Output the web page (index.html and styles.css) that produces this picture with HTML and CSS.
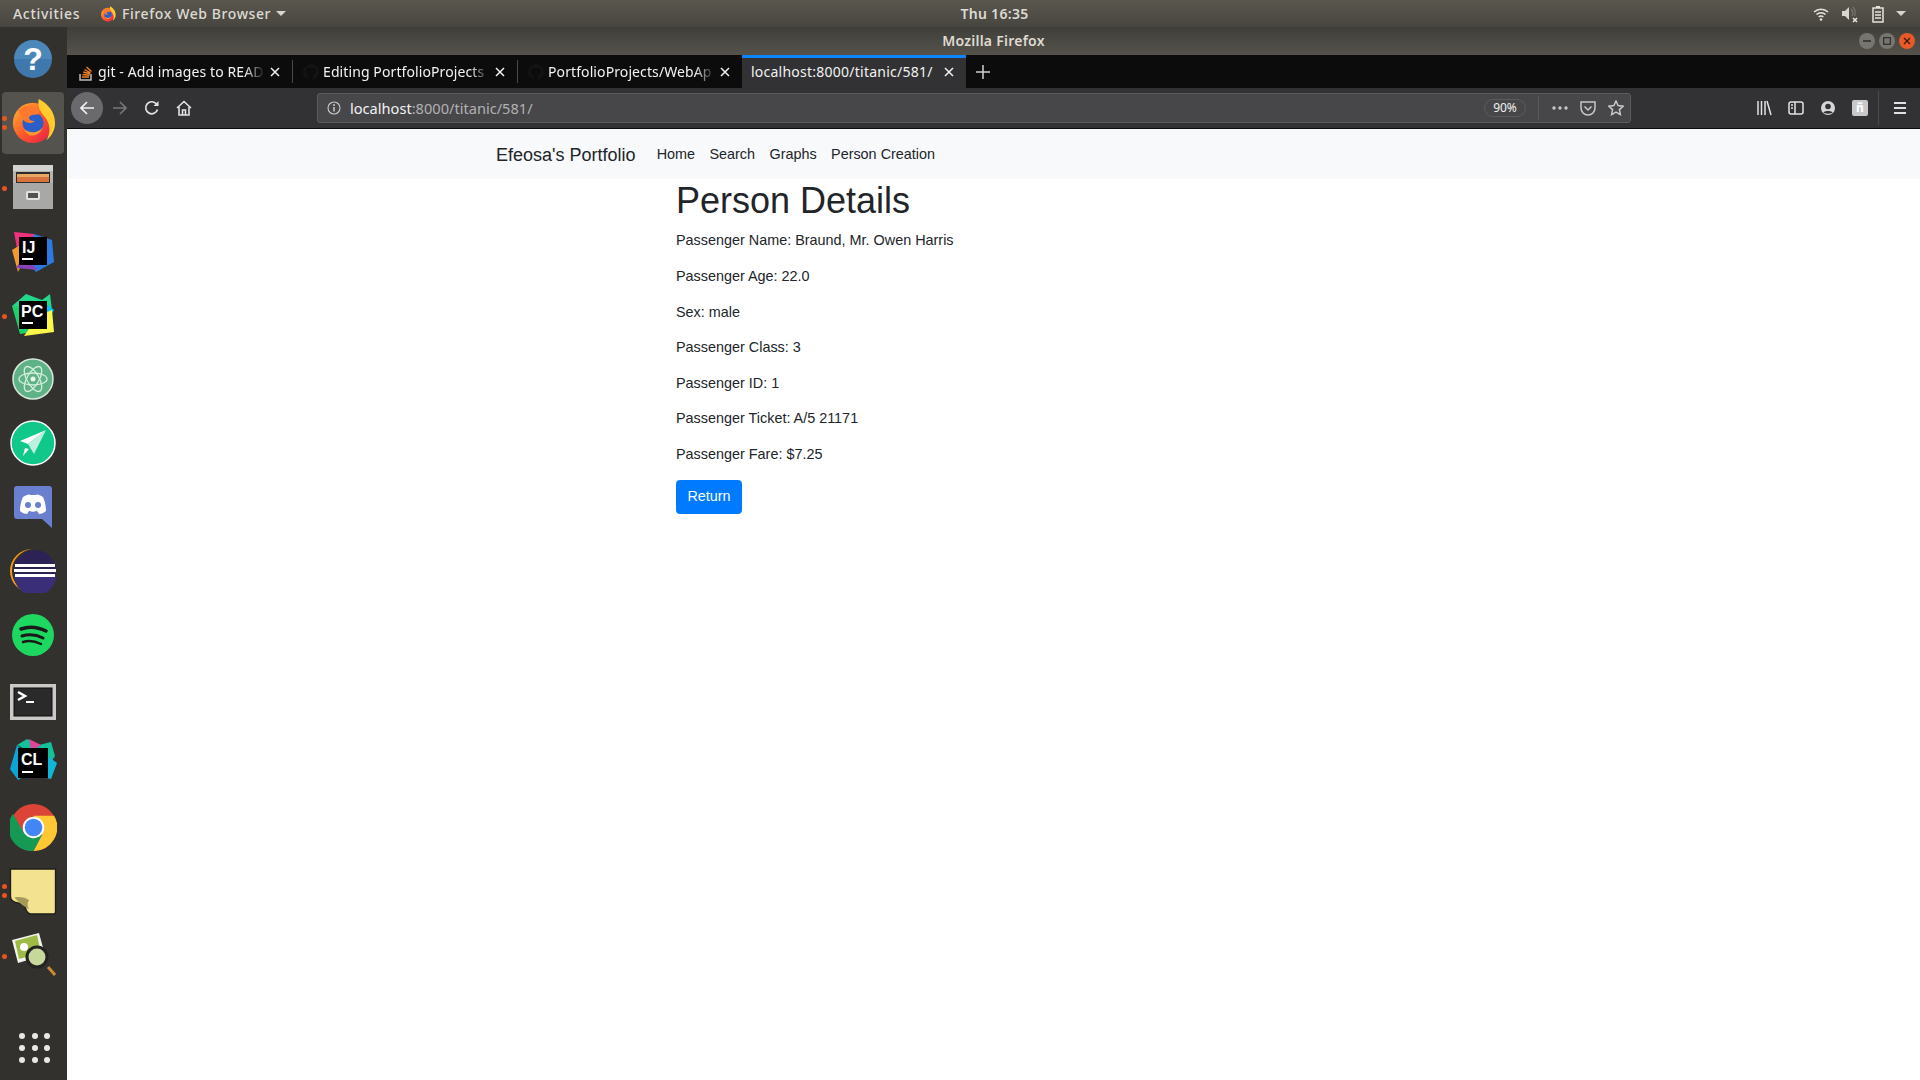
FILE: index.html
```html
<!DOCTYPE html>
<html lang="en">
<head>
    <meta charset="UTF-8">
    <title>Mozilla Firefox</title>
    <link rel="stylesheet" href="styles.css">
</head>
<body>
    <!-- GNOME top bar -->
    <header class="topbar">
        <div class="topbar-left">
            <span class="activities">Activities</span>
            <svg class="app-icon" width="16" height="18" viewBox="0 0 48 48"><use href="#firefox"/></svg>
            <span class="app-name">Firefox Web Browser</span>
            <span class="caret"></span>
        </div>
        <div class="clock">Thu 16:35</div>
        <div class="tray">
            <svg width="16" height="16" viewBox="0 0 16 16" fill="none" stroke="#e6e3dc" stroke-width="1.5"><path d="M1 6a10 10 0 0 1 14 0M3.5 8.5a6.5 6.5 0 0 1 9 0M5.7 11a3.2 3.2 0 0 1 4.6 0"/><circle cx="8" cy="13.5" r="1.3" fill="#e6e3dc" stroke="none"/></svg>
            <svg width="18" height="18" viewBox="0 0 18 18" fill="none"><path d="M1 6h3l4-4v13l-4-4H1z" fill="#d8d5ce"/><path d="M10 4a6 6 0 0 1 1 7M12 2a9 9 0 0 1 1.500 9" stroke="#77756f" stroke-width="1.200"/><path d="M12 13l4 4M16 13l-4 4" stroke="#e6e3dc" stroke-width="1.600"/></svg>
            <svg width="14" height="18" viewBox="0 0 14 18" fill="none"><path d="M5 1h4v2H5z" fill="#e6e3dc"/><rect x="2" y="3" width="10" height="14" stroke="#e6e3dc" stroke-width="1.500"/><path d="M4 7h6M4 10h6M4 13h6" stroke="#e6e3dc" stroke-width="1.500"/></svg>
            <span class="caret tray-caret"></span>
        </div>
    </header>

    <div class="desktop">
        <!-- dock -->
        <nav class="dock">
            <div class="dock-item">
                <svg width="40" height="40" viewBox="0 0 40 40"><circle cx="20" cy="20" r="19" fill="#3f78ad"/><path d="M1 20a19 19 0 0 1 38 0z" fill="#5a96c8" opacity=".5"/><text x="20" y="31" class="icon-q">?</text></svg>
            </div>
            <div class="dock-item is-active">
                <i class="pip pip-1"></i><i class="pip pip-2"></i>
                <svg width="46" height="46" viewBox="0 0 48 48"><use href="#firefox"/></svg>
            </div>
            <div class="dock-item">
                <i class="pip pip-single"></i>
                <svg width="42" height="46" viewBox="0 0 42 46"><rect x="1" y="1" width="40" height="44" rx="2" fill="#b5b5b3"/><rect x="1" y="1" width="40" height="6" fill="#d2d2d0"/><rect x="4" y="8" width="34" height="12" fill="#2e2c2a"/><rect x="5" y="10" width="32" height="3" fill="#e9a765"/><rect x="5" y="13" width="32" height="5" fill="#d9733e"/><rect x="1" y="19" width="40" height="26" fill="#a8a8a6"/><rect x="14" y="27" width="14" height="9" rx="2" fill="#e2e2e0"/><rect x="16" y="29" width="10" height="5" fill="#55534f"/></svg>
            </div>
            <div class="dock-item">
                <svg width="46" height="46" viewBox="0 0 46 46"><path d="M4 4l20 2 6 12-22 8z" fill="#f0327d"/><path d="M24 6l18 6 2 22-18 10-12-14z" fill="#2c7ae0"/><path d="M2 22l10-6 2 16-6 12z" fill="#f09a30"/><path d="M6 40l8-12 14 14z" fill="#8a42b8"/><rect x="9" y="9" width="28" height="28" fill="#000"/><text x="12" y="25" class="icon-jb">IJ</text><rect x="12" y="30" width="11" height="2" fill="#fff"/></svg>
            </div>
            <div class="dock-item">
                <i class="pip pip-single"></i>
                <svg width="46" height="46" viewBox="0 0 46 46"><path d="M2 14L16 2l16 6 8-6 2 16-14 6z" fill="#21d789"/><path d="M2 14l8 28 14-2-6-26z" fill="#1fcf6c"/><path d="M34 10l10 8-6 10z" fill="#07c3f2"/><path d="M14 44l30-4-2-22-14 6z" fill="#fcf84a"/><rect x="9" y="9" width="28" height="28" fill="#000"/><text x="11" y="25" class="icon-jb">PC</text><rect x="12" y="30" width="11" height="2" fill="#fff"/></svg>
            </div>
            <div class="dock-item">
                <svg width="42" height="42" viewBox="0 0 42 42" fill="none"><circle cx="21" cy="21" r="20" fill="#5fb286" stroke="#d8e8dc" stroke-width="1.500"/><g stroke="#d4eedd" stroke-width="1.300"><ellipse cx="21" cy="21" rx="14" ry="6"/><ellipse cx="21" cy="21" rx="14" ry="6" transform="rotate(60 21 21)"/><ellipse cx="21" cy="21" rx="14" ry="6" transform="rotate(120 21 21)"/></g><circle cx="21" cy="21" r="2.500" fill="#e8f6ee"/></svg>
            </div>
            <div class="dock-item">
                <svg width="46" height="46" viewBox="0 0 46 46"><circle cx="23" cy="23" r="22" fill="#0fc88a" stroke="#fff" stroke-width="1.500"/><path d="M36 10L10 21l8 3z" fill="#fff"/><path d="M36 10L18 24l6 10z" fill="#bdf1dd"/><path d="M15 28l4 1-6 7z" fill="#fff"/></svg>
            </div>
            <div class="dock-item">
                <svg width="40" height="42" viewBox="0 0 40 42"><path d="M4 0h32a3 3 0 0 1 3 3v39l-10-9H4a3 3 0 0 1-3-3V3a3 3 0 0 1 3-3z" fill="#6a80ce"/><path d="M7 25c0-8 3-14 3-14 3-2 6-3 7-2h6c1-1 4 0 7 2 0 0 3 6 3 14-2 2-5 3-7 3l-2-3c-4 1-4 1-8 0l-2 3c-2 0-5-1-7-3z" fill="#fff"/><circle cx="15" cy="19" r="3" fill="#6a80ce"/><circle cx="25" cy="19" r="3" fill="#6a80ce"/></svg>
            </div>
            <div class="dock-item">
                <svg width="50" height="44" viewBox="0 0 50 44"><path d="M24 0a22 22 0 0 0 0 44 24 22 0 0 1-20-22A24 22 0 0 1 24 0z" fill="#f09a1a"/><circle cx="27" cy="22" r="21" fill="#2c2255"/><path d="M6 26h42a21 21 0 0 1-42 0z" fill="#3a2e78"/><path d="M7 15h40v3H7zM6 20h42v3H6zM7 25h40v3H7z" fill="#fff"/></svg>
            </div>
            <div class="dock-item">
                <svg width="42" height="42" viewBox="0 0 42 42" fill="none"><circle cx="21" cy="21" r="21" fill="#1ed760"/><g stroke="#1a1a1a" stroke-linecap="round"><path d="M9 15c8-3 17-2 25 2" stroke-width="3.500"/><path d="M10 22c7-2 15-1 21 2" stroke-width="3"/><path d="M11 28c6-2 12-1 18 2" stroke-width="2.500"/></g></svg>
            </div>
            <div class="dock-item dock-terminal">
                <svg width="48" height="38" viewBox="0 0 48 38" fill="none"><rect x="1" y="1" width="46" height="36" fill="#c9c9c7"/><rect x="5" y="5" width="38" height="28" fill="#2a2a2a" stroke="#0c0c0c"/><path d="M9 9l7 4-7 4" stroke="#fff" stroke-width="2.500"/><path d="M17 19h8" stroke="#fff" stroke-width="2"/></svg>
            </div>
            <div class="dock-item">
                <svg width="48" height="48" viewBox="0 0 48 48"><path d="M8 6l10-6 12 6 12-3 4 14-4 6z" fill="#12c09c"/><path d="M20 0l12 6-10 6z" fill="#e0459a"/><path d="M8 6L1 30l8 11 10-6-2-20z" fill="#0ca6d6"/><path d="M24 36l18 4 6-16-8-6z" fill="#10b6d8"/><rect x="9" y="9" width="30" height="30" fill="#000"/><text x="12" y="26" class="icon-jb">CL</text><rect x="13" y="32" width="11" height="2" fill="#fff"/></svg>
            </div>
            <div class="dock-item">
                <svg width="47" height="47" viewBox="0 0 48 48"><circle cx="24" cy="24" r="24" fill="#db4437"/><path d="M24 48a24 24 0 0 0 21-36H24l9 19z" fill="#fcc934"/><path d="M24 48L33 31 24 33 14 29 3 10a24 24 0 0 0 21 38z" fill="#159a55"/><circle cx="24" cy="24" r="11" fill="#fff"/><circle cx="24" cy="24" r="9" fill="#4285f4"/></svg>
            </div>
            <div class="dock-item">
                <i class="pip pip-1"></i><i class="pip pip-2"></i>
                <svg width="50" height="47" viewBox="0 0 48 48"><path d="M1 1h46v44a2 2 0 0 1-2 2H22c-5 0-5-6-7-9-3-3-14-1-14-9z" fill="#f3e28f" stroke="#1e1e1a" stroke-width="1.400"/><path d="M5 30c6-1 11 0 15 3-2 2-2 6 0 9-6-3-11-7-15-12z" fill="#a69a58"/></svg>
            </div>
            <div class="dock-item">
                <i class="pip pip-single"></i>
                <svg width="46" height="48" viewBox="0 0 46 48" fill="none"><path d="M2 9l27-7 6 22-27 8z" fill="#f2f2ee"/><path d="M5 10l22-6 4 18-22 6z" fill="#9dbb45"/><circle cx="14" cy="16" r="4" fill="#fff"/><path d="M38 36l7 8" stroke="#c88a3a" stroke-width="3"/><circle cx="27" cy="26" r="10" fill="#c6d89a" stroke="#232323" stroke-width="3"/></svg>
            </div>
            <div class="dock-apps">
                <i></i><i></i><i></i><i></i><i></i><i></i><i></i><i></i><i></i>
            </div>
        </nav>

        <div class="window">
            <div class="titlebar">
                <span class="title">Mozilla Firefox</span>
                <div class="win-buttons">
                    <span class="win-btn"><svg width="8" height="8" viewBox="0 0 8 8"><path d="M0 4h8" stroke="#2f2e2a" stroke-width="1.500"/></svg></span>
                    <span class="win-btn"><svg width="8" height="8" viewBox="0 0 8 8"><rect x=".7" y=".7" width="6.600" height="6.600" fill="none" stroke="#2f2e2a" stroke-width="1.200"/></svg></span>
                    <span class="win-btn win-close"><svg width="8" height="8" viewBox="0 0 8 8"><path d="M1 1l6 6M7 1L1 7" stroke="#3a1a0c" stroke-width="1.300"/></svg></span>
                </div>
            </div>

            <!-- tabs -->
            <div class="tabbar">
                <div class="tab">
                    <svg class="favicon" width="16" height="18" viewBox="0 0 16 18" fill="none"><path d="M2 11v6h11v-6" stroke="#bcbbbb" stroke-width="1.500"/><path d="M4 14h7M4.500 11.500l7 .7M5.300 9l6.800 1.800M6.500 6.500l6 3.300M8.500 4l5 4.500" stroke="#f48024" stroke-width="1.400"/></svg>
                    <span class="tab-title">git - Add images to READ</span>
                    <svg class="tab-x" width="12" height="12" viewBox="0 0 12 12"><path d="M2 2l8 8M10 2l-8 8" stroke="#f2f2f2" stroke-width="1.500"/></svg>
                </div>
                <div class="tab">
                    <svg class="favicon" width="16" height="16" viewBox="0 0 16 16"><use href="#octocat"/></svg>
                    <span class="tab-title">Editing PortfolioProjects</span>
                    <svg class="tab-x" width="12" height="12" viewBox="0 0 12 12"><path d="M2 2l8 8M10 2l-8 8" stroke="#f2f2f2" stroke-width="1.500"/></svg>
                </div>
                <div class="tab">
                    <svg class="favicon" width="16" height="16" viewBox="0 0 16 16"><use href="#octocat"/></svg>
                    <span class="tab-title">PortfolioProjects/WebAp</span>
                    <svg class="tab-x" width="12" height="12" viewBox="0 0 12 12"><path d="M2 2l8 8M10 2l-8 8" stroke="#f2f2f2" stroke-width="1.500"/></svg>
                </div>
                <div class="tab tab-active">
                    <span class="tab-title">localhost:8000/titanic/581/</span>
                    <svg class="tab-x" width="12" height="12" viewBox="0 0 12 12"><path d="M2 2l8 8M10 2l-8 8" stroke="#f2f2f2" stroke-width="1.500"/></svg>
                </div>
                <svg class="new-tab" width="14" height="14" viewBox="0 0 14 14"><path d="M7 0v14M0 7h14" stroke="#d0d0d0" stroke-width="1.500"/></svg>
            </div>

            <!-- toolbar -->
            <div class="toolbar">
                <span class="tool tool-back"><svg width="16" height="16" viewBox="0 0 16 16" fill="none" stroke="#f2f2f2" stroke-width="1.700"><path d="M15 8H2M8 2L2 8l6 6"/></svg></span>
                <span class="tool"><svg width="16" height="16" viewBox="0 0 16 16" fill="none" stroke="#77777a" stroke-width="1.700"><path d="M1 8h13M8 2l6 6-6 6"/></svg></span>
                <span class="tool"><svg width="16" height="16" viewBox="0 0 16 16" fill="none" stroke="#e2e2e2" stroke-width="1.700"><path d="M13.500 9.500A6 6 0 1 1 12 3.500L14 5.500"/><path d="M14.500 1v5h-5" fill="#e2e2e2" stroke="none"/></svg></span>
                <span class="tool"><svg width="16" height="16" viewBox="0 0 16 16" fill="none" stroke="#e2e2e2" stroke-width="1.600"><path d="M1 8l7-6.500L15 8M3 7v8h10V7M6.500 15v-5h3v5"/></svg></span>
                <div class="urlbar">
                    <svg class="url-info" width="14" height="14" viewBox="0 0 14 14" fill="none"><circle cx="7" cy="7" r="6" stroke="#c8c8c8" stroke-width="1.100"/><path d="M7 6v4.500" stroke="#c8c8c8" stroke-width="1.500"/><circle cx="7" cy="4" r="1" fill="#c8c8c8"/></svg>
                    <span class="url-text">localhost<span class="url-rest">:8000/titanic/581/</span></span>
                    <span class="zoom-pill">90%</span>
                    <span class="url-sep"></span>
                    <span class="url-action"><svg width="16" height="4" viewBox="0 0 16 4" fill="#c8c8c8"><circle cx="2" cy="2" r="1.700"/><circle cx="8" cy="2" r="1.700"/><circle cx="14" cy="2" r="1.700"/></svg></span>
                    <span class="url-action"><svg width="16" height="16" viewBox="0 0 16 16" fill="none" stroke="#c8c8c8" stroke-width="1.500"><path d="M1 2h14v6a7 7 0 0 1-14 0z"/><path d="M4.500 6.500L8 10l3.500-3.500"/></svg></span>
                    <span class="url-action"><svg width="16" height="16" viewBox="0 0 16 16" fill="none" stroke="#c8c8c8" stroke-width="1.500"><path d="M8 1l2.100 4.600 5 .6-3.700 3.400 1 5L8 12.100 3.600 14.600l1-5L.9 6.200l5-.6z"/></svg></span>
                </div>
                <div class="toolbar-right">
                    <span class="tool"><svg width="16" height="16" viewBox="0 0 16 16" fill="none" stroke="#e2e2e2" stroke-width="1.500"><path d="M2 1v14M5.500 1v14M9 1v14M11 1l4 14"/></svg></span>
                    <span class="tool"><svg width="16" height="16" viewBox="0 0 16 16" fill="none" stroke="#e2e2e2" stroke-width="1.500"><rect x="1" y="2" width="14" height="12" rx="2"/><path d="M7 2v12M3 5h2M3 8h2"/></svg></span>
                    <span class="tool"><svg width="16" height="16" viewBox="0 0 16 16"><circle cx="8" cy="8" r="7" fill="#d6d6d6"/><circle cx="8" cy="6.500" r="2.800" fill="#323234"/><path d="M3.500 12.500c1-2 8-2 9 0-1 1.500-8 1.500-9 0z" fill="#323234"/></svg></span>
                    <span class="tool"><span class="ext-badge">ñ</span></span>
                    <span class="toolbar-sep"></span>
                    <span class="tool"><svg width="14" height="14" viewBox="0 0 14 14" stroke="#e2e2e2" stroke-width="2"><path d="M1 2h12M1 7h12M1 12h12"/></svg></span>
                </div>
            </div>

            <!-- page content -->
            <main class="page">
                <div class="navbar">
                    <a class="brand">Efeosa's Portfolio</a>
                    <a class="nav-link">Home</a>
                    <a class="nav-link">Search</a>
                    <a class="nav-link">Graphs</a>
                    <a class="nav-link">Person Creation</a>
                </div>
                <section class="details">
                    <h1>Person Details</h1>
                    <p>Passenger Name: Braund, Mr. Owen Harris</p>
                    <p>Passenger Age: 22.0</p>
                    <p>Sex: male</p>
                    <p>Passenger Class: 3</p>
                    <p>Passenger ID: 1</p>
                    <p>Passenger Ticket: A/5 21171</p>
                    <p>Passenger Fare: $7.25</p>
                    <a class="btn">Return</a>
                </section>
            </main>
        </div>
    </div>

    <!-- shared symbols -->
    <svg class="defs" width="0" height="0">
        <defs>
            <linearGradient id="ffOuter" x1="0" y1="0" x2="1" y2="1">
                <stop offset="0" stop-color="#ffbd2e"/>
                <stop offset=".5" stop-color="#ff5a2b"/>
                <stop offset="1" stop-color="#e3174f"/>
            </linearGradient>
            <symbol id="firefox" viewBox="0 0 48 48">
                <circle cx="24" cy="26" r="21" fill="url(#ffOuter)"/>
                <path d="M30 1c10 5 17 14 17 25 0 8-4 14-9 18 4-7 4-14 1-20-2-5-8-9-9-15-.5-3-.5-5 0-8z" fill="#ffcb2d"/>
                <circle cx="24" cy="26" r="11" fill="#2a5ec8"/>
                <path d="M8 13c5-5 11-6 18-4 4 2 5 6 3 8-3 1-8 0-9 3-1 2 2 4 6 4-3 3-9 3-12-1-1-3-4-6-6-10z" fill="#ff7a2f"/>
                <path d="M14 32c6 5 15 5 20-1-2 6-8 9-13 8-3-1-5-4-7-7z" fill="#ff9a2e"/>
            </symbol>
            <symbol id="octocat" viewBox="0 0 16 16">
                <path fill="#141414" d="M8 0a8 8 0 0 0-2.500 15.600c.4.100.5-.2.500-.4v-1.400c-2.200.5-2.700-1-2.700-1-.4-.9-.9-1.200-.9-1.200-.7-.5.100-.5.100-.5.800.100 1.200.8 1.200.8.700 1.200 1.900.9 2.300.7.100-.5.300-.9.500-1.100-1.800-.2-3.600-.9-3.600-4 0-.9.300-1.600.8-2.100-.1-.2-.4-1 .1-2.100 0 0 .7-.2 2.200.8a7.600 7.600 0 0 1 4 0c1.500-1 2.200-.8 2.200-.8.400 1.100.2 1.900.1 2.100.5.600.8 1.300.8 2.100 0 3.100-1.900 3.700-3.700 3.900.3.300.6.700.6 1.500v2.200c0 .2.100.5.500.4A8 8 0 0 0 8 0z"/>
            </symbol>
        </defs>
    </svg>
</body>
</html>
```

FILE: styles.css
```css
body {
    margin: 0;
    width: 1920px;
    height: 1080px;
    display: flex;
    flex-direction: column;
    overflow: hidden;
    font-family: 'Noto Sans', sans-serif;
    background-color: #33312d;
}

.defs {
    display: block;
    height: 0;
}

/* Top bar */
.topbar {
    flex: 0 0 27px;
    display: grid;
    grid-template-columns: 1fr auto 1fr;
    align-items: center;
    background: linear-gradient(#5a574f, #47453f);
    color: #dedbd3;
    font-size: 14px;
    font-weight: 500;
    padding-left: 69px;
}

.topbar-left {
    display: flex;
    align-items: center;
    margin-left: -56px;
}

.activities {
    width: 87px;
    letter-spacing: .7px;
}

.app-name {
    margin-left: 6px;
    letter-spacing: .6px;
}

.caret {
    margin-left: 5px;
    border-left: 5px solid transparent;
    border-right: 5px solid transparent;
    border-top: 5px solid #d8d5ce;
}

.clock {
    white-space: nowrap;
    letter-spacing: .3px;
    font-weight: 600;
}

.tray {
    display: flex;
    align-items: center;
    justify-content: flex-end;
    gap: 12px;
    padding-right: 14px;
}

.tray-caret {
    margin-left: -1px;
}

.desktop {
    flex: 1;
    display: flex;
    min-height: 0;
}

/* Dock */
.dock {
    flex: 0 0 67px;
    display: flex;
    flex-direction: column;
    background-color: #33312d;
    padding-top: 1px;
}

.dock-item {
    flex: 0 0 64px;
    box-sizing: border-box;
    display: flex;
    align-items: center;
    justify-content: center;
    position: relative;
    padding: 0 1px 2px 0;
}

.dock-terminal {
    padding: 4px 1px 0 0;
}

.is-active {
    flex-basis: 62px;
    background-color: #55534e;
    border-radius: 4px;
    margin: 0 3px 2px 2px;
    padding: 0 0 4px;
}

.pip {
    position: absolute;
    left: 2px;
    width: 5px;
    height: 5px;
    border-radius: 50%;
    background-color: #e95420;
}

.is-active .pip {
    left: 0;
}

.pip-single {
    top: 30px;
}

.pip-1 {
    top: 24px;
}

.pip-2 {
    top: 33px;
}

.icon-q {
    font-family: 'Liberation Sans', sans-serif;
    font-size: 32px;
    font-weight: bold;
    fill: #fff;
    text-anchor: middle;
}

.icon-jb {
    font-family: 'Liberation Sans', sans-serif;
    font-size: 16px;
    font-weight: bold;
    fill: #fff;
}

.dock-apps {
    margin: auto 0 0 19px;
    padding-bottom: 17px;
    display: grid;
    grid-template-columns: repeat(3, 6px);
    column-gap: 6.5px;
    row-gap: 6px;
}

.dock-apps i {
    width: 6px;
    height: 6px;
    border-radius: 50%;
    background-color: #e8e8e6;
}

/* Firefox window */
.window {
    flex: 1;
    display: flex;
    flex-direction: column;
    min-width: 0;
}

.titlebar {
    flex: 0 0 28px;
    box-sizing: border-box;
    padding-bottom: 2px;
    display: flex;
    align-items: center;
    justify-content: center;
    position: relative;
    background: linear-gradient(#3f3f3a, #55524b);
    color: #dfdbd2;
    font-size: 14px;
    font-weight: 600;
    letter-spacing: .25px;
}

.win-buttons {
    position: absolute;
    right: 5px;
    top: 6px;
    display: flex;
    gap: 4px;
}

.win-btn {
    width: 16px;
    height: 16px;
    border-radius: 50%;
    background-color: #77756f;
    display: flex;
    align-items: center;
    justify-content: center;
}

.win-close {
    background-color: #e9592a;
}

.tabbar {
    flex: 0 0 33px;
    display: flex;
    align-items: stretch;
    background-color: #0c0c0d;
    color: #f2f2f2;
    font-size: 14px;
}

.tab {
    width: 225px;
    box-sizing: border-box;
    display: flex;
    align-items: center;
    gap: 4px;
    padding: 0 11px;
    position: relative;
}

.tab + .tab::before {
    content: "";
    position: absolute;
    left: 0;
    top: 5px;
    bottom: 5px;
    width: 1px;
    background-color: #4a4a4d;
}

.tab-active {
    width: 224px;
    background-color: #323234;
    border-top: 3px solid #0a84ff;
    padding: 0 11px 3px 9px;
}

.tab-active::before {
    display: none;
}

.tab-title {
    flex: 1;
    min-width: 0;
    white-space: nowrap;
    overflow: hidden;
    letter-spacing: .1px;
    -webkit-mask-image: linear-gradient(to right, #000 88%, transparent);
    mask-image: linear-gradient(to right, #000 88%, transparent);
}

.tab-active .tab-title {
    letter-spacing: .24px;
    -webkit-mask-image: none;
    mask-image: none;
}

.new-tab {
    align-self: center;
    margin-left: 10px;
}

.toolbar {
    flex: 0 0 40px;
    display: flex;
    align-items: center;
    background-color: #323234;
    border-bottom: 1px solid #0c0c0d;
    padding-left: 4px;
}

.tool {
    flex: 0 0 32px;
    height: 32px;
    display: flex;
    align-items: center;
    justify-content: center;
}

.tool-back {
    border-radius: 50%;
    background-color: #6a6a6c;
    margin-right: 1px;
}

.urlbar {
    width: 1314px;
    height: 30px;
    box-sizing: border-box;
    margin-left: 117px;
    display: flex;
    align-items: center;
    background-color: #474749;
    border: 1px solid #5b5b5e;
    border-radius: 3px;
    color: #f2f2f2;
    font-size: 14.6px;
}

.url-info {
    margin-left: 9px;
}

.url-text {
    margin-left: 9px;
    flex: 1;
}

.url-rest {
    color: #b1b1b3;
}

.zoom-pill {
    width: 42px;
    height: 18px;
    box-sizing: border-box;
    border: 1px solid #5b5b5e;
    border-radius: 9px;
    font-size: 12px;
    line-height: 15px;
    text-align: center;
    margin-right: 12px;
}

.url-sep {
    width: 1px;
    height: 24px;
    background-color: #5b5b5e;
    margin-right: 7px;
}

.url-action {
    flex: 0 0 28px;
    display: flex;
    justify-content: center;
}

.toolbar-right {
    display: flex;
    align-items: center;
    margin-left: 117px;
}

.toolbar-sep {
    width: 1px;
    height: 34px;
    background-color: #4a4a4d;
    margin: 0 5px 0 2px;
}

.ext-badge {
    width: 16px;
    height: 16px;
    border-radius: 2px;
    background-color: #c8c8ca;
    color: #fff;
    font-size: 12px;
    font-weight: bold;
    line-height: 15px;
    text-align: center;
}

/* Page */
.page {
    flex: 1;
    background-color: #fff;
    font-family: 'Liberation Sans', sans-serif;
    color: #212529;
    font-size: 14.4px;
    line-height: 21.6px;
}

.navbar {
    height: 50px;
    box-sizing: border-box;
    padding: 2px 0 0 429px;
    display: flex;
    align-items: center;
    background-color: #f8f9fa;
}

.brand {
    font-size: 18px;
    margin-right: 14px;
    line-height: 27px;
}

.nav-link {
    padding: 0 7.2px;
    margin-top: -1px;
}

.details {
    padding-left: 609px;
}

h1 {
    margin: 0 0 8.2px;
    font-size: 36px;
    font-weight: 500;
    line-height: 43.2px;
}

p {
    margin: 0 0 14px;
}

.btn {
    display: inline-block;
    padding: 5.4px 10.4px;
    border: 1px solid #007bff;
    border-radius: 3.6px;
    background-color: #007bff;
    color: #fff;
}
```
